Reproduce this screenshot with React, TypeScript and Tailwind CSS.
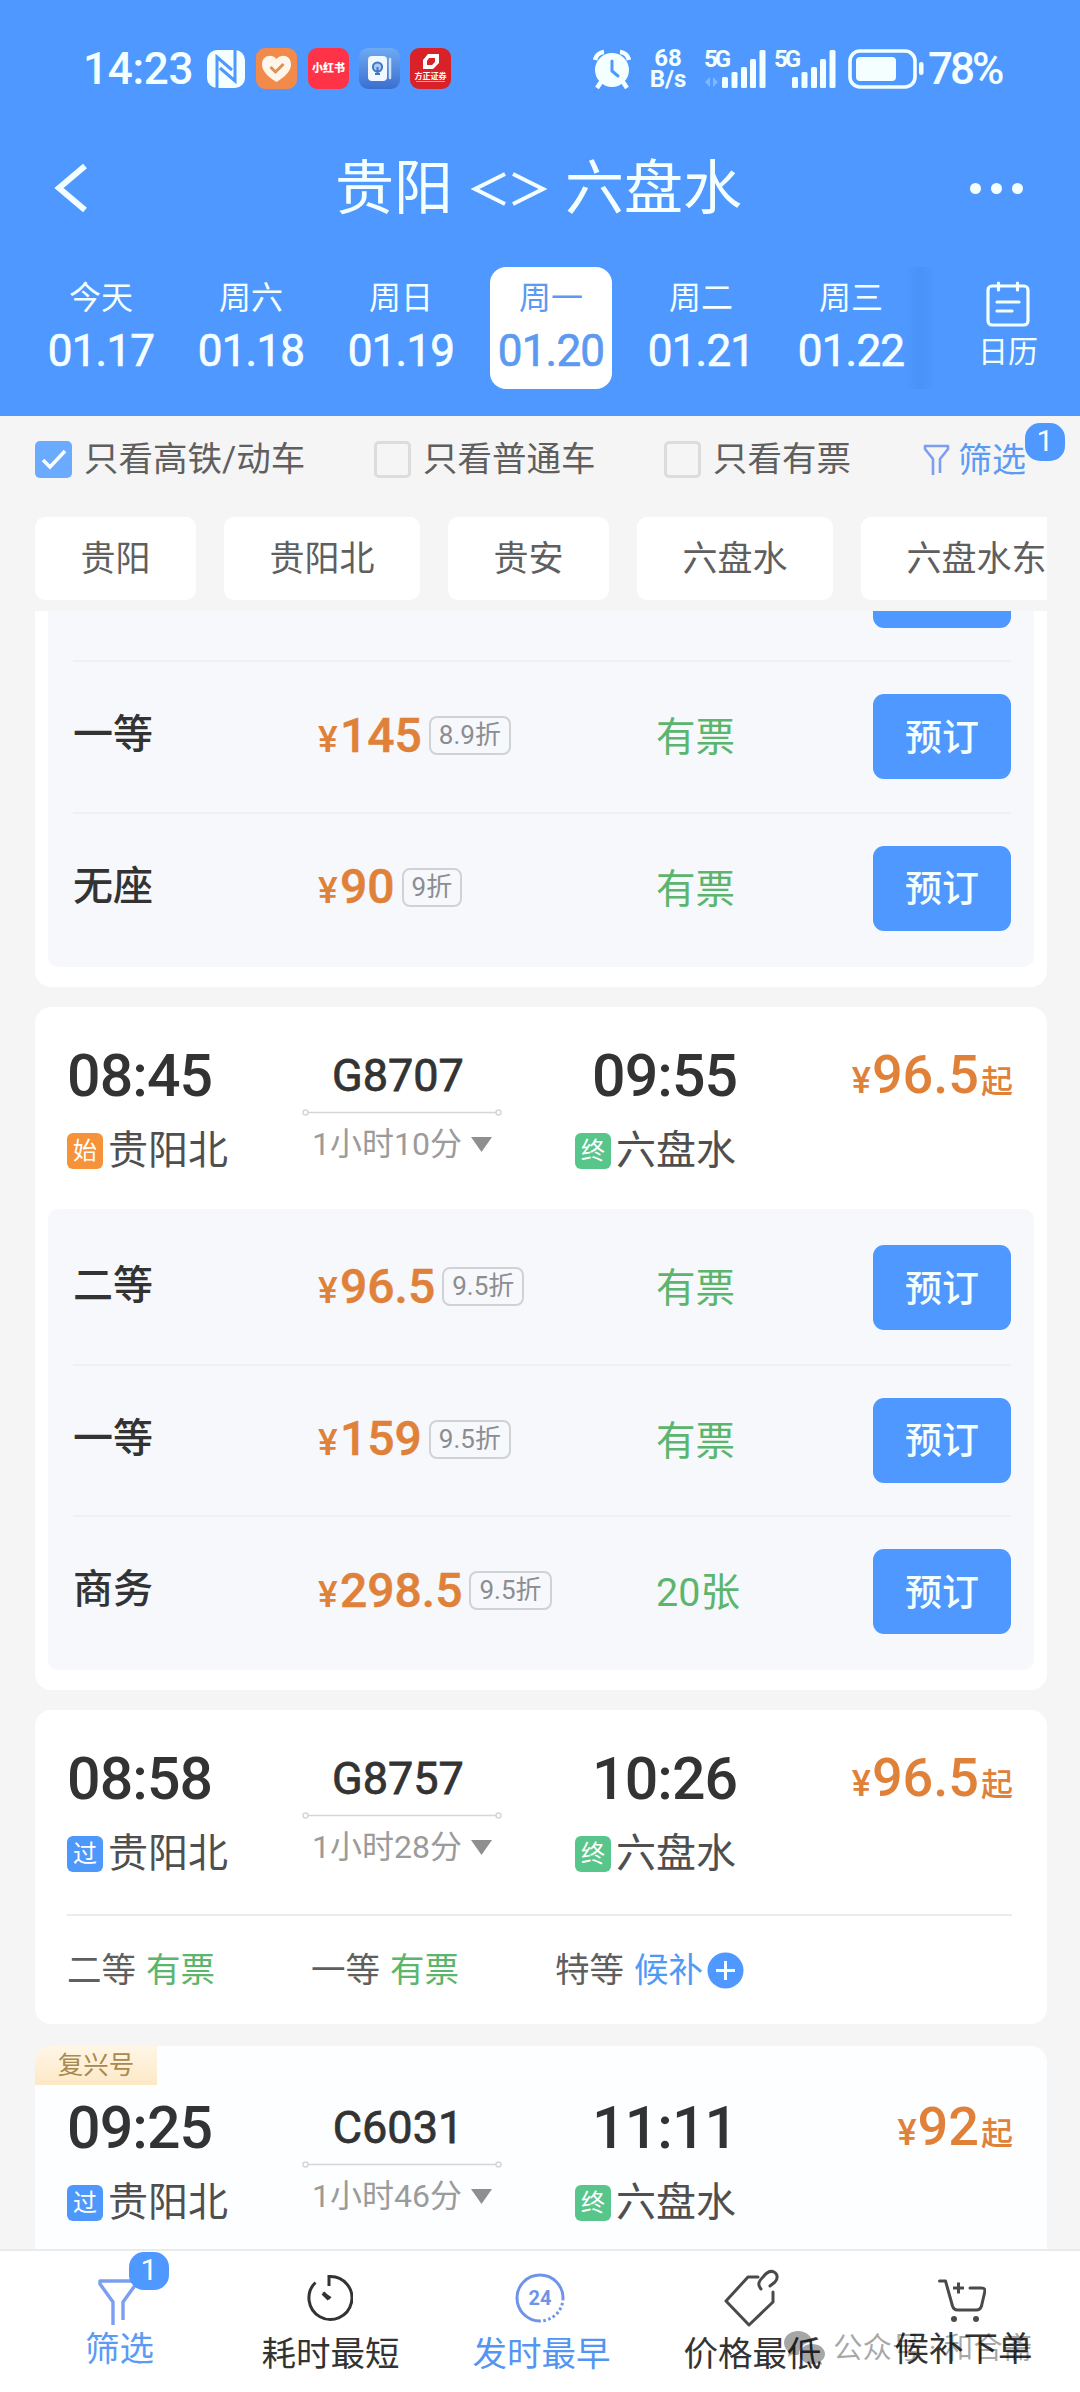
import React from 'react';
import clsx from 'clsx';

type Seat = { name: string; price: string; discount: string; stock: string };
type Stop = 'start' | 'pass' | 'end';
type Train = {
  no: string;
  depart: string;
  arrive: string;
  duration: string;
  from: Stop;
  price: string;
};

const days = [
  { week: '今天', date: '01.17' },
  { week: '周六', date: '01.18' },
  { week: '周日', date: '01.19' },
  { week: '周一', date: '01.20', active: true },
  { week: '周二', date: '01.21' },
  { week: '周三', date: '01.22' },
];

const stations = ['贵阳', '贵阳北', '贵安', '六盘水', '六盘水东'];

const firstSeats: Seat[] = [
  { name: '一等', price: '145', discount: '8.9折', stock: '有票' },
  { name: '无座', price: '90', discount: '9折', stock: '有票' },
];

const g8707Seats: Seat[] = [
  { name: '二等', price: '96.5', discount: '9.5折', stock: '有票' },
  { name: '一等', price: '159', discount: '9.5折', stock: '有票' },
  { name: '商务', price: '298.5', discount: '9.5折', stock: '20张' },
];

const trains: Train[] = [
  { no: 'G8707', depart: '08:45', arrive: '09:55', duration: '1小时10分', from: 'start', price: '96.5' },
  { no: 'G8757', depart: '08:58', arrive: '10:26', duration: '1小时28分', from: 'pass', price: '96.5' },
  { no: 'C6031', depart: '09:25', arrive: '11:11', duration: '1小时46分', from: 'pass', price: '92' },
];

const stopTags: Record<Stop, { text: string; className: string }> = {
  start: { text: '始', className: 'bg-[#f5923a]' },
  pass: { text: '过', className: 'bg-[#4f98fb]' },
  end: { text: '终', className: 'bg-[#58c58a]' },
};

/* ---------- status bar ---------- */

const Signal: React.FC<{ faded?: boolean }> = ({ faded }) => (
  <div className="relative h-[38px] w-[62px]">
    <span className="absolute left-0 top-0 text-[24px] font-bold leading-[18px] tracking-[-3px]">5G</span>
    <svg className="absolute bottom-0 right-0" width="62" height="38" viewBox="0 0 62 38" fill="currentColor">
      {faded && <path d="M1 32l5-5v10zM7 27v10M9 27v10l5-5z" opacity="0.3" />}
      <rect x="18" y="27" width="6" height="11" rx="1.5" />
      <rect x="27.5" y="22" width="6" height="16" rx="1.5" />
      <rect x="37" y="17" width="6" height="21" rx="1.5" />
      <rect x="46" y="9" width="6" height="29" rx="1.5" />
      <rect x="55.5" y="0" width="6" height="38" rx="1.5" />
    </svg>
  </div>
);

const StatusBar = () => (
  <div className="flex h-[137px] items-center justify-between pl-[83px] pr-[76px] text-[#f4ffff]">
    <div className="flex items-center">
      <span className="w-[124px] text-[44px] font-medium leading-none tracking-[-0.3px]">14:23</span>
      <svg width="38" height="40" viewBox="0 0 38 40">
        <rect x="0" y="1" width="38" height="38" rx="10" fill="currentColor" />
        <path d="M10 40V8l15 13M28 0v32L13 19" fill="none" stroke="#4f98ff" strokeWidth="3" />
      </svg>
      <svg className="ml-[11px]" width="41" height="41" viewBox="0 0 41 41">
        <rect width="41" height="41" rx="9" fill="#f28a4c" />
        <path d="M20.500 34C12 29 6 23 6 16.500 6 8 15 5 20.500 11 26 5 35 8 35 16.500 35 23 29 29 20.500 34z" fill="#fff5ea" />
        <path d="M14.500 19l5 5 8-8" fill="none" stroke="#d99258" strokeWidth="3" />
      </svg>
      <div className="ml-[11px] flex size-[41px] items-center justify-center rounded-[9px] bg-[#ff3348] text-[11px] font-black leading-none text-white">
        小红书
      </div>
      <svg className="ml-[10px]" width="41" height="41" viewBox="0 0 41 41">
        <defs>
          <linearGradient id="bulb" x1="0" y1="0" x2="0" y2="1">
            <stop offset="0" stopColor="#6fa9f2" />
            <stop offset="1" stopColor="#3a6fd0" />
          </linearGradient>
        </defs>
        <rect width="41" height="41" rx="9" fill="url(#bulb)" />
        <rect x="9" y="8" width="19" height="25" rx="4" fill="#f2f8ff" />
        <path d="M31 11v19" stroke="#cfe0fb" strokeWidth="2.500" strokeLinecap="round" />
        <circle cx="18.500" cy="19" r="4.600" fill="#a9c9f7" stroke="#4377c6" strokeWidth="2" />
        <path d="M18.500 19v7M16 26h5" stroke="#4377c6" strokeWidth="2" />
      </svg>
      <div className="ml-[10px] flex h-[41px] w-[41px] flex-col items-center rounded-[9px] bg-[#d92228] pt-[5px] text-white">
        <svg width="18" height="17" viewBox="0 0 18 17">
          <path d="M6 1h11v9l-6 6H1V7z M7 5h6v4l-3 3H5V8z" fill="currentColor" fillRule="evenodd" />
        </svg>
        <span className="mt-[2px] whitespace-nowrap text-[8px] font-bold leading-[9px]">方正证券</span>
        <span className="h-px w-[29px] bg-[#f0a0a0]" />
      </div>
    </div>

    <div className="flex items-center">
      <svg width="38" height="40" viewBox="0 0 38 40">
        <circle cx="19" cy="21" r="17" fill="currentColor" />
        <path d="M2 11a10 10 0 0 1 9-8M36 11a10 10 0 0 0-9-8" fill="none" stroke="currentColor" strokeWidth="4.500" />
        <path d="M8 33l-4 6M30 33l4 6" stroke="currentColor" strokeWidth="4.500" />
        <path d="M19 12v10l6 5" fill="none" stroke="#4f98ff" strokeWidth="3" strokeLinecap="round" />
      </svg>
      <div className="ml-[14px] flex w-[46px] flex-col items-center text-[24px] font-bold leading-[21px]">
        <span>68</span>
        <span>B/s</span>
      </div>
      <div className="ml-[13px]">
        <Signal faded />
      </div>
      <div className="ml-[8px]">
        <Signal />
      </div>
      <svg className="ml-[12px]" width="76" height="40" viewBox="0 0 76 40">
        <rect x="2" y="2" width="65" height="36" rx="10" fill="none" stroke="currentColor" strokeWidth="3.600" />
        <rect x="8" y="8" width="40" height="24" rx="4" fill="currentColor" />
        <rect x="71" y="13" width="4.500" height="13" rx="2.200" fill="currentColor" />
      </svg>
      <span className="ml-[4px] w-[76px] text-[44px] font-medium leading-none tracking-[-3px]">78%</span>
    </div>
  </div>
);

/* ---------- header ---------- */

const CalendarIcon = () => (
  <svg width="44" height="46" viewBox="0 0 44 46" fill="none" stroke="currentColor" strokeWidth="3.200" strokeLinecap="round">
    <rect x="2" y="5" width="40" height="39" rx="4" />
    <path d="M12.500 2v7M31.500 2v7M11 21h22M11 30h15" />
  </svg>
);

const Header = () => (
  <header className="h-[416px] bg-[#4f98ff] text-[#f4ffff]">
    <StatusBar />
    <div className="flex h-[100px] items-center justify-between pl-[54px] pr-[57px] pt-[2px]">
      <svg width="34" height="48" viewBox="0 0 34 48" fill="none" stroke="currentColor" strokeWidth="6">
        <path d="M31 2L5 24l26 22" />
      </svg>
      <h1 className="flex items-center pl-[19px] text-[59px] leading-none">
        <span>贵阳</span>
        <svg className="mx-[18px] mt-[2px]" width="76" height="36" viewBox="0 0 76 36" fill="none" stroke="currentColor" strokeWidth="4">
          <path d="M34 3L4 18l30 15M42 3l30 15-30 15" />
        </svg>
        <span>六盘水</span>
      </h1>
      <div className="flex gap-[10px]">
        <i className="size-[11px] rounded-full bg-[#f4ffff]" />
        <i className="size-[11px] rounded-full bg-[#f4ffff]" />
        <i className="size-[11px] rounded-full bg-[#f4ffff]" />
      </div>
    </div>
    <div className="flex pl-[26px] pt-[30px]">
      {days.map((day) => (
        <div key={day.date} className="flex w-[150px] justify-center">
          <div
            className={clsx(
              'flex h-[122px] w-[122px] flex-col items-center rounded-[16px] pt-[15px] leading-none',
              day.active && 'bg-white text-[#5b9af0]'
            )}
          >
            <span className="text-[32px] leading-[32px]">{day.week}</span>
            <span className="mt-[15px] text-[44px] leading-[44px] tracking-[-0.8px] [-webkit-text-stroke:0.7px]">
              {day.date}
            </span>
          </div>
        </div>
      ))}
      <div className="-ml-[20px] h-[122px] w-[30px] bg-linear-to-r from-[#4f98ff] via-[#4a92f6] to-[#4f98ff]" />
      <div className="flex flex-1 flex-col items-center pt-[14px]">
        <CalendarIcon />
        <span className="mt-[10px] text-[30px] leading-[30px]">日历</span>
      </div>
    </div>
  </header>
);

/* ---------- filters ---------- */

const CheckBox: React.FC<{ label: string; checked?: boolean }> = ({ label, checked }) => (
  <label className="flex items-center">
    <span
      className={clsx(
        'flex size-[37px] items-center justify-center rounded-[5px]',
        checked ? 'bg-[#6aabff]' : 'border-[3px] border-[#dcdcdc]'
      )}
    >
      {checked && (
        <svg width="26" height="22" viewBox="0 0 26 22" fill="none" stroke="#fff" strokeWidth="3.500">
          <path d="M2 11l7 7L24 2" />
        </svg>
      )}
    </span>
    <span className="ml-[12px] text-[34.500px] leading-none">{label}</span>
  </label>
);

const CountBadge = () => (
  <span className="flex h-[38px] w-[40px] items-center justify-center rounded-[15px] bg-[#4f98ff] pb-[2px] text-[30px] leading-none text-white">
    1
  </span>
);

const Filters = () => (
  <div className="h-[195px] overflow-hidden text-[#5f5f5f]">
    <div className="relative flex h-[87px] items-center pl-[35px]">
      <div className="w-[339px]">
        <CheckBox label="只看高铁/动车" checked />
      </div>
      <div className="w-[290px]">
        <CheckBox label="只看普通车" />
      </div>
      <div className="w-[259px]">
        <CheckBox label="只看有票" />
      </div>
      <div className="flex items-center text-[#5b9bf2]">
        <svg width="27" height="32" viewBox="0 0 27 32" fill="none" stroke="#7c9df0" strokeWidth="2.600" strokeLinejoin="round">
          <path d="M10 31V15L2 5V2h23v3l-8 10v14" />
        </svg>
        <span className="ml-[8px] text-[34px] leading-none">筛选</span>
      </div>
      <div className="absolute left-[1025px] top-[7px]">
        <CountBadge />
      </div>
    </div>
    <div className="ml-[35px] mr-[33px] mt-[14px] flex gap-[28px] overflow-hidden">
      {stations.map((name) => (
        <span
          key={name}
          className="flex h-[83px] shrink-0 items-center rounded-[10px] bg-white px-[45.500px] pt-px text-[35px] leading-none"
        >
          {name}
        </span>
      ))}
    </div>
  </div>
);

/* ---------- train list ---------- */

const SeatRow: React.FC<{ seat: Seat; divided: boolean }> = ({ seat, divided }) => (
  <div className={clsx('flex h-[151.500px] items-center', divided && 'border-t-2 border-[#eef0f4]')}>
    <span className="w-[245px] pb-[3px] text-[40px] font-medium leading-none text-[#333]">{seat.name}</span>
    <div className="flex w-[338px] items-center pb-[2px] text-[#e0813a]">
      <span className="flex items-baseline font-medium leading-none">
        <span className="w-[22px] text-[37px]">¥</span>
        <span className="text-[48px] leading-[48px] [-webkit-text-stroke:0.5px]">{seat.price}</span>
      </span>
      <span className="ml-[7px] rounded-[8px] border-2 border-[#d0d2d6] px-[8px] py-[3px] text-[26px] leading-[29px] text-[#8b8d90]">
        {seat.discount}
      </span>
    </div>
    <span className="pt-[2px] text-[39.500px] leading-none text-[#5cb56c]">{seat.stock}</span>
    <button className="ml-auto h-[85px] w-[138px] rounded-[11px] bg-[#4f98ff] pt-[3px] text-[37px] font-medium leading-none text-[#f4ffff]">
      预订
    </button>
  </div>
);

const StopName: React.FC<{ stop: Stop; name: string }> = ({ stop, name }) => (
  <div className="mt-[26px] flex items-center">
    <span
      className={clsx(
        'flex size-[36px] items-center justify-center rounded-[6px] text-[24px] leading-none text-white',
        stopTags[stop].className
      )}
    >
      {stopTags[stop].text}
    </span>
    <span className="ml-[5px] text-[40px] leading-[40px] text-[#4f4f4f]">{name}</span>
  </div>
);

const TrainHeader: React.FC<{ train: Train }> = ({ train }) => (
  <div className="flex h-[202px] items-start pl-[32px] pr-[34px] pt-[39px] text-[#333]">
    <div className="w-[235px]">
      <div className="text-[59px] font-medium leading-[59px] tracking-[-0.9px]">{train.depart}</div>
      <StopName stop={train.from} name="贵阳北" />
    </div>
    <div className="flex w-[200px] flex-col items-center">
      <span className="pr-[8px] text-[45px] leading-[60px] [-webkit-text-stroke:0.8px]">{train.no}</span>
      <svg className="mt-[3px]" width="200" height="7" viewBox="0 0 200 7" fill="#fff" stroke="#d6d6d6" strokeWidth="1.500">
        <path d="M5 3.500h190" />
        <circle cx="3.500" cy="3.500" r="2.500" />
        <circle cx="196.500" cy="3.500" r="2.500" />
      </svg>
      <span className="mt-[11px] flex items-center text-[32px] leading-[34px] text-[#9b9b9b]">
        {train.duration}
        <svg className="ml-[9px]" width="21" height="15" viewBox="0 0 21 15" fill="#8f8f8f">
          <path d="M0 0h21L10.500 15z" />
        </svg>
      </span>
    </div>
    <div className="ml-[73px]">
      <div className="pl-[17px] text-[59px] font-medium leading-[59px] tracking-[-0.9px]">{train.arrive}</div>
      <StopName stop="end" name="六盘水" />
    </div>
    <div className="ml-auto flex items-baseline pt-px font-medium leading-[56px] text-[#e0813a]">
      <span className="text-[36px]">¥</span>
      <span className="ml-px text-[54px]">{train.price}</span>
      <span className="ml-[2px] text-[32px]">起</span>
    </div>
  </div>
);

const SeatPanel: React.FC<{ seats: Seat[] }> = ({ seats }) => (
  <div className="mx-[13px] rounded-[10px] bg-[#f6f8fc] pb-[3px] pl-[25px] pr-[23px] pt-[3px]">
    {seats.map((seat, i) => (
      <SeatRow key={seat.name} seat={seat} divided={i > 0} />
    ))}
  </div>
);

const TrainList = () => (
  <main className="h-[1638px] overflow-hidden pl-[35px] pr-[33px]">
    {/* tail of the card that is scrolled under the filter bar */}
    <section className="h-[376px] rounded-b-[16px] bg-white px-[13px]">
      <div className="rounded-b-[10px] bg-[#f6f8fc] pb-[4px] pl-[25px] pr-[23px]">
        <div className="flex h-[49px] justify-end">
          <div className="h-[17px] w-[138px] rounded-b-[11px] bg-[#4f98ff]" />
        </div>
        {firstSeats.map((seat) => (
          <SeatRow key={seat.name} seat={seat} divided />
        ))}
      </div>
    </section>

    <section className="mt-[20px] h-[683px] rounded-[16px] bg-white">
      <TrainHeader train={trains[0]} />
      <SeatPanel seats={g8707Seats} />
    </section>

    <section className="mt-[20px] h-[314px] rounded-[16px] bg-white">
      <TrainHeader train={trains[1]} />
      <div className="ml-[32px] mr-[35px] mt-[2px] flex h-[110px] items-center border-t-2 border-[#ececec] text-[34.500px] leading-none text-[#5f5f5f]">
        <span className="w-[244px]">
          二等<span className="ml-[10px] text-[#5cb56c]">有票</span>
        </span>
        <span className="w-[244px]">
          一等<span className="ml-[10px] text-[#5cb56c]">有票</span>
        </span>
        <span className="flex items-center">
          特等<span className="ml-[10px] text-[#4f9af5]">候补</span>
          <svg className="ml-[4px]" width="37" height="37" viewBox="0 0 37 37">
            <circle cx="18.500" cy="18.500" r="18" fill="#4f98ff" />
            <path d="M18.500 9v19M9 18.500h19" stroke="#f4ffff" strokeWidth="3" />
          </svg>
        </span>
      </div>
    </section>

    <section className="mt-[22px] h-[220px] rounded-t-[16px] bg-[#fdfeff]">
      <div className="h-[13px]">
        <span className="flex h-[39px] w-[122px] items-center justify-center rounded-tl-[16px] bg-linear-to-b from-[#fff6e6] to-[#fde8c6] text-[25.500px] leading-none text-[#a8894e]">
          复兴号
        </span>
      </div>
      <TrainHeader train={trains[2]} />
    </section>
  </main>
);

/* ---------- bottom bar ---------- */

const TabItem: React.FC<{ label: string; color: string; raised?: boolean; children: React.ReactNode }> = ({
  label,
  color,
  raised,
  children,
}) => (
  <div className={clsx('flex w-[211px] flex-col items-center', color)}>
    <div className="flex h-[93px] items-center pr-[3px]">{children}</div>
    <span className={clsx('text-[34.500px] leading-none', raised ? '-mt-[12px]' : '-mt-[7px]')}>{label}</span>
  </div>
);

const BottomBar = () => (
  <nav className="relative flex h-[143px] border-t-2 border-[#ebebeb] bg-white pl-[14px]">
    <TabItem label="筛选" color="text-[#5b9bf2]" raised>
      <svg className="mt-[8px]" width="44" height="48" viewBox="0 0 44 48" fill="none" stroke="#7c9df0" strokeWidth="3.400" strokeLinejoin="round">
        <path d="M17 47V24L4 6V3h36v3L27 24v18" />
      </svg>
    </TabItem>
    <TabItem label="耗时最短" color="text-[#333]">
      <svg width="48" height="48" viewBox="0 0 48 48" fill="none" stroke="currentColor" strokeWidth="3">
        <path d="M10.500 8.500A21.500 21.500 0 1 0 24 2.500V12" />
        <path d="M17 17.500l9.500 5.500-2.500 3z" fill="currentColor" stroke="none" />
        <path d="M18 19l6 6" strokeWidth="4" />
      </svg>
    </TabItem>
    <TabItem label="发时最早" color="text-[#5595f2]">
      <div className="relative flex size-[50px] items-center justify-center">
        <svg className="absolute inset-0" width="50" height="50" viewBox="0 0 50 50" fill="none" stroke="#6f93ea" strokeWidth="3">
          <path d="M25 48A23 23 0 1 1 48 25" />
          <path d="M48 25A23 23 0 0 1 25 48" strokeDasharray="2.500 2.500" />
        </svg>
        <span className="text-[20px] font-bold leading-none text-[#6f93ea]">24</span>
      </div>
    </TabItem>
    <TabItem label="价格最低" color="text-[#333]">
      <svg width="56" height="58" viewBox="0 0 56 58" fill="none" stroke="#4a4a4a" strokeWidth="3" strokeLinecap="round" strokeLinejoin="round">
        <path d="M35 8H25L3 32l23 24 24-23V23" />
        <path d="M38 20c-4-5-2-8 2-12 4-5 7-7 11-5 4 2 4 7 1 10l-5 4" />
      </svg>
    </TabItem>
    <TabItem label="候补下单" color="text-[#333]" raised>
      <svg className="mt-[7px]" width="48" height="46" viewBox="0 0 48 46" fill="none" stroke="#4a4a4a" strokeWidth="3" strokeLinecap="round" strokeLinejoin="round">
        <path d="M1.500 3h6l7 25c1 3 3 4 5 4h19c3 0 4-1 5-4l3-13c1-4 0-5-3-5H32" />
        <path d="M15 10h11M20.500 4.500v11" strokeLinecap="butt" />
        <circle cx="16" cy="41" r="3" fill="#4a4a4a" stroke="none" />
        <circle cx="38" cy="41" r="3" fill="#4a4a4a" stroke="none" />
      </svg>
    </TabItem>
    <div className="absolute left-[129px] top-px">
      <CountBadge />
    </div>
    {/* account watermark laid over the labels */}
    <div className="absolute left-[784px] top-[80px] flex items-center text-black/35">
      <svg width="41" height="35" viewBox="0 0 41 35" fill="currentColor">
        <path d="M14 0c8 0 14 5 14 11-7 0-13 5-13 12l-1 1c-2 0-3 0-5-1l-5 3 1-5c-3-2-5-6-5-9C0 5 6 0 14 0z" />
        <path d="M28 13c7 0 13 4 13 10 0 3-2 6-4 7l1 4-4-2c-2 1-4 1-6 1-7 0-12-4-12-10s5-10 12-10z" />
      </svg>
      <span className="ml-[8px] whitespace-nowrap text-[29.500px] leading-none">公众号 · 和合斋</span>
    </div>
  </nav>
);

const App: React.FC = () => {
  return (
    <div className="flex h-[2392px] w-[1080px] flex-col overflow-hidden bg-[#f5f5f5] font-[Roboto,'Noto_Sans_CJK_SC',sans-serif]">
      <Header />
      <Filters />
      <TrainList />
      <BottomBar />
    </div>
  );
};

export default App;
